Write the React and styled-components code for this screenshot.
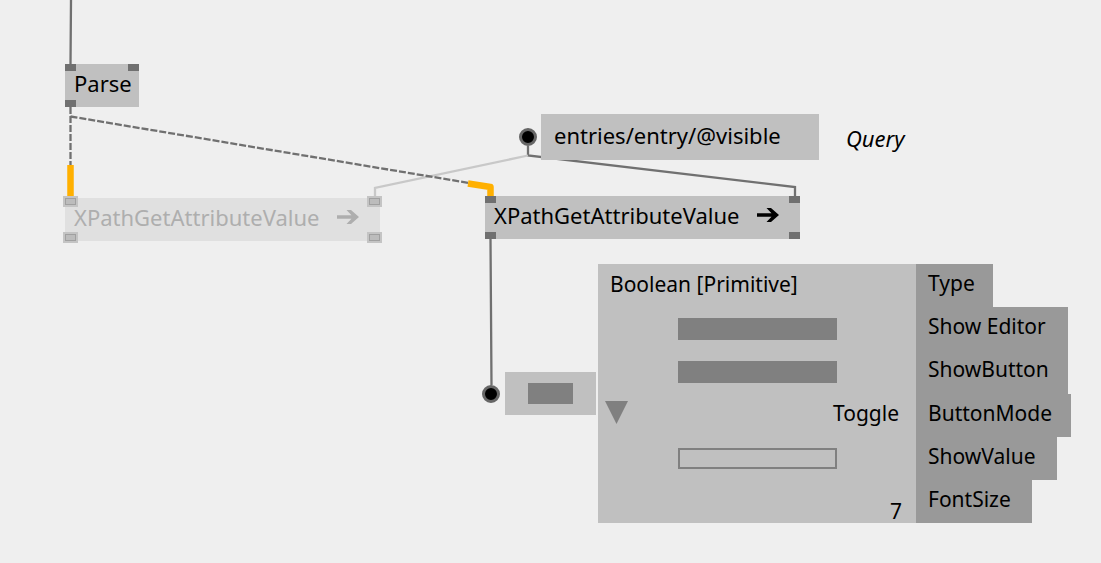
import React from 'react';
import styled, { createGlobalStyle, css } from 'styled-components';

const Global = createGlobalStyle`
  *, *::before, *::after { box-sizing: border-box; }
  body {
    margin: 0;
    background: #efefef;
    color: #000;
    font-family: 'Noto Sans', 'Open Sans', sans-serif;
    font-size: 22px;
    line-height: 28px;
  }
  input, select, button { font: inherit; color: inherit; margin: 0; }
`;

const Canvas = styled.main`
  position: relative;
  min-height: 100vh;
  overflow: hidden;
`;

const Links = styled.svg`
  position: absolute;
  inset: 0;
  width: 100%;
  height: 100%;
  fill: none;
  stroke: #707070;
  stroke-width: 2.3;
`;

const placed = css`
  position: absolute;
  left: ${(p) => p.$x}px;
  top: ${(p) => p.$y}px;
`;

const NodeBox = styled.section`
  ${placed}
  display: flex;
  align-items: center;
  gap: 18px;
  width: ${(p) => p.$w}px;
  height: 43px;
  padding: 0 9px 5px;
  white-space: nowrap;
  background: ${(p) => (p.$faded ? '#e0e0e0' : '#c0c0c0')};
  color: ${(p) => (p.$faded ? '#aeaeae' : '#000')};
`;

const Pin = styled.span`
  position: absolute;
  width: 11px;
  height: 7px;
  background: ${(p) => (p.$faded ? '#bcbcbc' : '#707070')};
  ${(p) => (p.$bottom ? 'bottom: 0;' : 'top: 0;')}
  ${(p) => (p.$right ? 'right: 0;' : 'left: 0;')}
  ${(p) => p.$faded && 'border: 1px solid #a0a0a0; box-shadow: 0 0 0 2px #c4c4c4;'}
`;

const ArrowIcon = styled.svg`
  width: 22px;
  height: 16px;
  fill: currentColor;
`;

const Pad = styled.span`
  ${placed}
  width: 18px;
  height: 18px;
  border: 3px solid #666;
  border-radius: 50%;
  background: #000;
`;

const TextBox = styled.input`
  ${placed}
  width: 278px;
  height: 46px;
  padding: 0 13px 4px;
  border: 0;
  border-radius: 0;
  outline: 0;
  background: #c0c0c0;
`;

const Caption = styled.label`
  ${placed}
  font-style: italic;
`;

const ToggleBox = styled.div`
  ${placed}
  display: flex;
  align-items: center;
  justify-content: center;
  width: 91px;
  height: 43px;
  background: #c0c0c0;
`;

const Toggle = styled.input`
  appearance: none;
  width: ${(p) => p.$w}px;
  height: ${(p) => p.$h}px;
  border: 2px solid #808080;
  &:checked { background: #808080; }
`;

const Inspector = styled.form`
  ${placed}
  display: grid;
  grid-auto-rows: 1fr;
  height: 259px;
  font-size: 21px;
`;

const Row = styled.div`
  display: flex;
  min-height: 0;
`;

const Cell = styled.div`
  position: relative;
  display: flex;
  align-items: center;
  justify-content: ${(p) => p.$align || 'center'};
  width: 318px;
  padding: ${(p) => (p.$align ? '0 12px 4px' : '0')};
  background: #c0c0c0;
`;

const Name = styled.label`
  min-width: ${(p) => p.$w}px;
  padding: 5px 12px 9px;
  white-space: nowrap;
  background: #999;
`;

const Choice = styled.select`
  appearance: none;
  width: 100%;
  height: 43px;
  padding: 0 17px 5px;
  border: 0;
  background: transparent;
  text-align: right;
  text-align-last: right;
`;

const DropMark = styled.svg`
  position: absolute;
  left: 7px;
  top: 7px;
  width: 23px;
  height: 23px;
  fill: #808080;
  pointer-events: none;
`;

const NumberBox = styled.input`
  width: 100%;
  height: 43px;
  padding: 19px 14px 0;
  border: 0;
  background: transparent;
  line-height: 24px;
  text-align: right;
`;

function Arrow() {
  return (
    <ArrowIcon viewBox="0 0 22 16" aria-hidden="true">
      <path d="M0 6.300H14.500L9.500 1H14L22 8L14 15H9.500L14.500 9.700H0z" />
    </ArrowIcon>
  );
}

function GetAttribute({ x, y, faded }) {
  return (
    <NodeBox $x={x} $y={y} $w={315} $faded={faded}>
      <Pin $faded={faded} />
      <Pin $faded={faded} $right />
      <Pin $faded={faded} $bottom />
      <Pin $faded={faded} $bottom $right />
      <span>XPathGetAttributeValue</span>
      <Arrow />
    </NodeBox>
  );
}

export default function App() {
  return (
    <>
      <Global />
      <Canvas>
        <Links aria-hidden="true">
          <path d="M71 0L70.500 64M528 146V155.500L795 187V196M490.500 239L491.500 385" />
          <path d="M528 155.500L375 188V198" stroke="#c8c8c8" />
          <path d="M70.500 107V166M70.500 116.500L469 183" strokeDasharray="7 2" />
          <path d="M70.500 165V198M468 183.500L490.500 187V196" stroke="#ffb000" strokeWidth="6.500" strokeLinejoin="round" />
        </Links>

        <NodeBox $x={65} $y={64} $w={74}>
          <Pin />
          <Pin $right />
          <Pin $bottom />
          <span>Parse</span>
        </NodeBox>
        <GetAttribute x={65} y={198} faded />
        <GetAttribute x={485} y={196} />

        <Pad $x={519} $y={128} />
        <TextBox id="query" type="text" defaultValue="entries/entry/@visible" $x={541} $y={114} />
        <Caption htmlFor="query" $x={846} $y={124}>Query</Caption>

        <Pad $x={482} $y={385} />
        <ToggleBox $x={505} $y={372}>
          <Toggle type="checkbox" aria-label="Boolean" defaultChecked $w={45} $h={21} />
        </ToggleBox>

        <Inspector $x={598} $y={264}>
          <Row>
            <Cell $align="flex-start">
              <output id="type">Boolean [Primitive]</output>
            </Cell>
            <Name htmlFor="type" $w={77}>Type</Name>
          </Row>
          <Row>
            <Cell><Toggle id="editor" type="checkbox" defaultChecked $w={159} $h={22} /></Cell>
            <Name htmlFor="editor" $w={152}>Show Editor</Name>
          </Row>
          <Row>
            <Cell><Toggle id="button" type="checkbox" defaultChecked $w={159} $h={22} /></Cell>
            <Name htmlFor="button" $w={152}>ShowButton</Name>
          </Row>
          <Row>
            <Cell>
              <DropMark viewBox="0 0 23 23" aria-hidden="true"><path d="M0 0h23L11.500 23z" /></DropMark>
              <Choice id="mode" defaultValue="Toggle"><option>Toggle</option></Choice>
            </Cell>
            <Name htmlFor="mode" $w={155}>ButtonMode</Name>
          </Row>
          <Row>
            <Cell><Toggle id="value" type="checkbox" $w={159} $h={21} /></Cell>
            <Name htmlFor="value" $w={141}>ShowValue</Name>
          </Row>
          <Row>
            <Cell><NumberBox id="size" type="text" inputMode="numeric" defaultValue="7" /></Cell>
            <Name htmlFor="size" $w={116}>FontSize</Name>
          </Row>
        </Inspector>
      </Canvas>
    </>
  );
}
